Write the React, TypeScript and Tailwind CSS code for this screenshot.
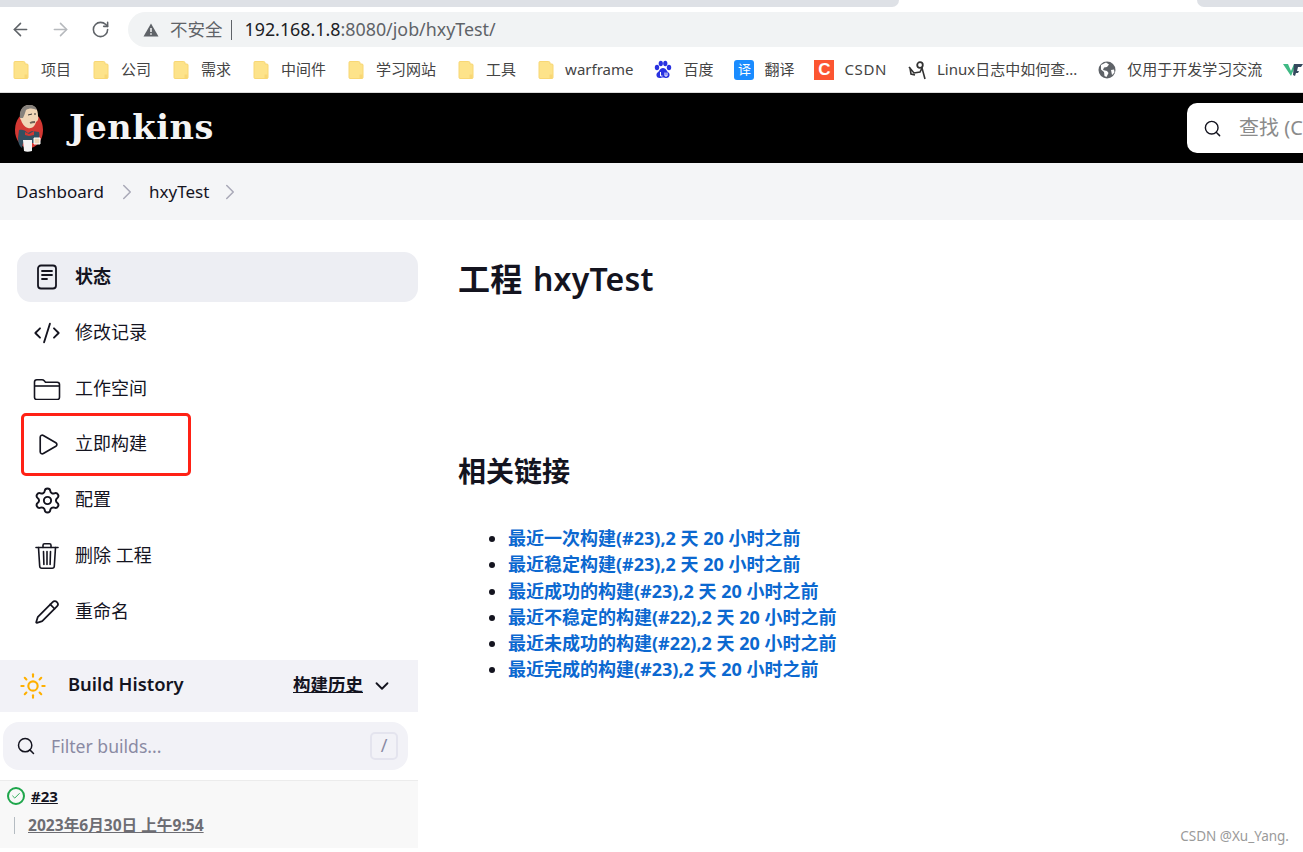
import React from "react";
import { ArrowLeft, ArrowRight, RotateCw, Search, ChevronRight, ChevronDown, Code2, Play, Settings, Pencil, Sun, Check } from "lucide-react";

const sans = "[font-family:'Noto_Sans','Noto_Sans_CJK_SC',sans-serif]";

function FolderMark() {
  return (
    <svg width="16" height="20" viewBox="0 0 16 20" className="shrink-0">
      <path d="M2 1.5h8.5c1 0 1.5.6 1.5 1.5v1h2c.6 0 1 .4 1 1v12.5c0 .6-.4 1-1 1H2c-.6 0-1-.4-1-1V2.500c0-.6.4-1 1-1z" fill="#fde38a" stroke="#f8d775" />
      <path d="M11.500 14.500h3v4h-3z" fill="#f8d775" />
    </svg>
  );
}

function Baidu() {
  return (
    <svg width="18" height="20" viewBox="0 0 18 20" className="shrink-0">
      <g fill="#2932e1">
        <ellipse cx="3" cy="7.500" rx="2.200" ry="2.800" />
        <ellipse cx="6.800" cy="3.500" rx="2.100" ry="2.800" />
        <ellipse cx="11.300" cy="3.500" rx="2.100" ry="2.800" />
        <ellipse cx="15" cy="7.500" rx="2.200" ry="2.800" />
        <path d="M9 8c3 0 3.500 3 5.500 4.500 2 1.800 1 5.500-2 5.500-1.500 0-2.300-.5-3.500-.5s-2 .5-3.500.5c-3 0-4-3.700-2-5.500C5.500 11 6 8 9 8z" />
      </g>
      <path d="M6.500 12v4h2M11 12.500v3.500h2v-3.500" stroke="#fff" strokeWidth="1" fill="none" />
    </svg>
  );
}

function LinuxMark() {
  return (
    <svg width="18" height="20" viewBox="0 0 18 20" className="shrink-0">
      <circle cx="12" cy="5" r="2.800" fill="none" stroke="#333" strokeWidth="1.800" />
      <path d="M1 7l5 6 6-1 2-4 3 11M2 8l1 6 4 1" fill="none" stroke="#333" strokeWidth="1.600" />
    </svg>
  );
}

function GlobeMark() {
  return (
    <svg width="18" height="18" viewBox="0 0 18 18" className="shrink-0">
      <circle cx="9" cy="9" r="8.500" fill="#5f6368" />
      <path d="M8 1.500l3 2-2 2.500-3 .5-1 2.500 4 1 1.500 2-2 4-2-1-.5-4-3-2.500L3 4zM13 9l3-.5.5 3-2.500 2.500z" fill="#fff" />
    </svg>
  );
}

function VueMark() {
  return (
    <svg width="20" height="14" viewBox="0 0 20 14" className="ml-[21px] shrink-0">
      <path d="M0 1h5l3 7 3-7h2L8 13z" fill="#3fb984" />
      <path d="M11 1h9l-2 3h-3l-1 4h2l-1 2h-2l-1 3-2-1z" fill="#35495e" />
    </svg>
  );
}

function Bookmark({ icon, label, cls, textCls = "" }: { icon: React.ReactNode; label: string; cls: string; textCls?: string }) {
  return (
    <div className={`flex shrink-0 items-center ${cls}`}>
      {icon}
      <span className={`mb-[2px] whitespace-nowrap text-[15px] leading-5 text-[#444] ${textCls}`}>{label}</span>
    </div>
  );
}

function JenkinsLogo() {
  return (
    <svg width="30" height="50" viewBox="0 0 30 50" className="shrink-0">
      <ellipse cx="15" cy="27" rx="14" ry="18" fill="#d33833" />
      <path d="M6 14c0-7 3-12 9-12 6 0 9 4 9 11 1 2 0 5-2 6-1 4-4 7-8 6-4-1-6-5-7-8-1-1-1-2-1-3z" fill="#f0d6b7" />
      <path d="M6 15c-1-7 2-13 9-13 5 0 7 2 8 5-4-2-8-2-11 0-1 3-2 6-3 8z" fill="#86817c" />
      <path d="M14 12l4-1M20 11l2 0" stroke="#333" strokeWidth="1" />
      <path d="M16 20c2-1 4-1 5-1" stroke="#6b6258" strokeWidth="1.800" />
      <path d="M5 27c3-1 6 0 9 3l4-2 7 1c1 4 0 8-3 10l-2 1H9l-1 5c-3-2-4-6-4-10z" fill="#335061" />
      <path d="M11 29l4 2 5-3 0 4-5 1-4-1z" fill="#d33833" />
      <path d="M9 37h9v11c-3 1-6 1-8 0z" fill="#f4f4f4" />
      <path d="M20 35h6v6h-6z" fill="#e9d2b5" stroke="#fff" />
    </svg>
  );
}

const stroke = 1.6;

function NavItem({ icon, label, active, children }: { icon: React.ReactNode; label: string; active?: boolean; children?: React.ReactNode }) {
  return (
    <div className={`relative flex h-[50px] items-center rounded-[14px] ${active ? "bg-[#edeef3]" : ""}`}>
      <div className="flex w-[58px] justify-center pl-[2px] text-[#14141f]">{icon}</div>
      <span className={`mb-[2px] text-[18px] leading-6 text-[#14141f] ${active ? "font-bold" : ""}`}>{label}</span>
      {children}
    </div>
  );
}

function StatusIcon() {
  return (
    <svg width="26" height="26" viewBox="0 0 26 26" fill="none" stroke="#14141f" strokeWidth={stroke + 0.2} strokeLinecap="round">
      <rect x="4" y="1.500" width="18" height="23" rx="3" />
      <path d="M8 7h10M8 11h10M8 15h5" />
    </svg>
  );
}

function FolderIcon() {
  return (
    <svg width="28" height="22" viewBox="0 0 28 22" fill="none" stroke="#14141f" strokeWidth={stroke} strokeLinejoin="round">
      <path d="M1.500 4c0-1.400 1-2.300 2.300-2.300h5.200c1 0 1.600.3 2.200 1l1.300 1.500h11.700c1.400 0 2.300.9 2.300 2.300v12.700c0 1.400-.9 2.300-2.300 2.300H3.800c-1.300 0-2.300-.9-2.300-2.300z" />
      <path d="M1.500 8h25" />
    </svg>
  );
}

function TrashIcon() {
  return (
    <svg width="26" height="28" viewBox="0 0 26 28" fill="none" stroke="#14141f" strokeWidth={stroke} strokeLinecap="round" strokeLinejoin="round">
      <path d="M2 5.500h22" />
      <path d="M9 5.500V3.300c0-.9.6-1.500 1.500-1.500h5c.9 0 1.500.6 1.500 1.500v2.200" />
      <path d="M4.500 5.500l1.200 18.800c.1 1.200 1 2 2.100 2h10.400c1.100 0 2-.8 2.100-2l1.200-18.800" />
      <path d="M9.500 9.500l.4 13M13 9.500v13M16.500 9.500l-.4 13" />
    </svg>
  );
}

const links = [
  "最近一次构建(#23),2 天 20 小时之前",
  "最近稳定构建(#23),2 天 20 小时之前",
  "最近成功的构建(#23),2 天 20 小时之前",
  "最近不稳定的构建(#22),2 天 20 小时之前",
  "最近未成功的构建(#22),2 天 20 小时之前",
  "最近完成的构建(#23),2 天 20 小时之前",
];

export default function App() {
  return (
    <div className={`relative flex h-[852px] w-[1303px] flex-col overflow-hidden bg-white ${sans}`}>
      {/* tab strip */}
      <div className="flex h-[7px] shrink-0 bg-white">
        <div className="w-[899px] rounded-br-lg bg-[#dee1e6]" />
        <div className="w-[298px]" />
        <div className="flex-1 rounded-bl-lg bg-[#dee1e6]" />
      </div>

      {/* address bar */}
      <div className="flex h-[40px] shrink-0 items-center pl-[10px] pt-[5px]">
        <ArrowLeft size={21} strokeWidth={1.8} className="text-[#5f6368]" />
        <ArrowRight size={21} strokeWidth={1.8} className="ml-[19px] text-[#b6b9bd]" />
        <RotateCw size={19} strokeWidth={2} className="ml-[20px] text-[#5f6368]" />
        <div className="ml-[18px] flex h-[35px] flex-1 items-center rounded-l-[18px] bg-[#f1f3f4] pl-[15px]">
          <svg width="16" height="14" viewBox="0 0 16 14" className="shrink-0">
            <path d="M8 0.500L15.500 13.500H0.500z" fill="#5f6368" />
            <path d="M8 5v4M8 10.300v1.500" stroke="#fff" strokeWidth="1.400" />
          </svg>
          <span className="ml-[11px] text-[17.5px] text-[#5f6368]">不安全</span>
          <span className="ml-[8px] h-[20px] w-px bg-[#5f6368]" />
          <span className="ml-[13px] whitespace-nowrap text-[17.85px] text-[#202124]">
            192.168.1.8<span className="text-[#5f6368]">:8080/job/hxyTest/</span>
          </span>
        </div>
      </div>

      {/* bookmarks */}
      <div className="flex h-[46px] shrink-0 items-center overflow-hidden border-b border-[#dcdcdc] pl-[13px]">
        <Bookmark icon={<FolderMark />} label="项目" cls="gap-[12px]" />
        <Bookmark icon={<FolderMark />} label="公司" cls="ml-[22px] gap-[12px]" />
        <Bookmark icon={<FolderMark />} label="需求" cls="ml-[22px] gap-[12px]" />
        <Bookmark icon={<FolderMark />} label="中间件" cls="ml-[22px] gap-[12px]" />
        <Bookmark icon={<FolderMark />} label="学习网站" cls="ml-[22px] gap-[12px]" />
        <Bookmark icon={<FolderMark />} label="工具" cls="ml-[22px] gap-[12px]" />
        <Bookmark icon={<FolderMark />} label="warframe" cls="ml-[22px] gap-[11px]" />
        <Bookmark icon={<Baidu />} label="百度" cls="ml-[21px] gap-[11px]" />
        <Bookmark
          icon={
            <span className="flex h-[20px] w-[20px] items-center justify-center rounded-[3px] bg-[#1a8cff] text-[13px] leading-none text-white">译</span>
          }
          label="翻译"
          cls="ml-[21px] gap-[10px]"
        />
        <Bookmark
          icon={
            <span className="flex h-[20px] w-[20px] items-center justify-center bg-[#fc5531] text-[17px] font-bold leading-none text-white [font-family:'Liberation_Sans',sans-serif]">C</span>
          }
          label="CSDN"
          cls="ml-[20px] gap-[10px]"
          textCls="tracking-[0.6px]"
        />
        <Bookmark icon={<LinuxMark />} label="Linux日志中如何查..." cls="ml-[21px] gap-[11px]" />
        <Bookmark icon={<GlobeMark />} label="仅用于开发学习交流" cls="ml-[21px] gap-[11px]" />
        <VueMark />
      </div>

      {/* Jenkins header */}
      <header className="flex h-[70px] shrink-0 items-center justify-between bg-black pl-[14px]">
        <div className="flex items-center">
          <JenkinsLogo />
          <span className="ml-[25px] text-[33.5px] font-bold leading-none tracking-[0.6px] text-[#f4f4f4] [font-family:'DejaVu_Serif',serif]">Jenkins</span>
        </div>
        <div className="flex h-[50px] w-[116px] items-center overflow-hidden rounded-l-[10px] bg-white pl-[16px]">
          <Search size={19} strokeWidth={1.8} className="shrink-0 text-[#14141f]" />
          <span className="ml-[17px] whitespace-nowrap text-[20px] text-[#8b8b8b]">查找 (C</span>
        </div>
      </header>

      {/* breadcrumb */}
      <nav className="flex h-[57px] shrink-0 items-center bg-[#f4f5f7] pl-[16px] text-[17px] text-[#14141f]">
        <span>Dashboard</span>
        <ChevronRight size={26} strokeWidth={1.4} className="ml-[10px] text-[#a9a9b8]" />
        <span className="ml-[9px]">hxyTest</span>
        <ChevronRight size={26} strokeWidth={1.4} className="ml-[8px] text-[#a9a9b8]" />
      </nav>

      {/* page */}
      <div className="flex flex-1 overflow-hidden">
        <aside className="flex w-[418px] shrink-0 flex-col pt-[32px]">
          <div className="flex flex-col gap-[5.8px] pl-[17px]">
            <NavItem active icon={<StatusIcon />} label="状态" />
            <NavItem icon={<Code2 size={28} strokeWidth={stroke} />} label="修改记录" />
            <NavItem icon={<FolderIcon />} label="工作空间" />
            <NavItem icon={<Play size={25} strokeWidth={stroke} />} label="立即构建">
              <div className="absolute left-[4px] top-[-6px] h-[63px] w-[170px] rounded-[5px] border-[3px] border-[#ff2115]" />
            </NavItem>
            <NavItem icon={<Settings size={29} strokeWidth={stroke} />} label="配置" />
            <NavItem icon={<TrashIcon />} label="删除 工程" />
            <NavItem icon={<Pencil size={26} strokeWidth={stroke} />} label="重命名" />
          </div>

          <div className="mt-[23px] flex h-[52px] shrink-0 items-center bg-[#f2f2f7] pl-[19px] pr-[25px]">
            <Sun size={28} strokeWidth={1.8} className="text-[#feb000]" />
            <span className="mb-[3px] ml-[21px] text-[18.4px] font-semibold text-[#14141f]">Build History</span>
            <span className="mb-[3px] ml-auto text-[17.5px] font-semibold text-[#14141f] underline">构建历史</span>
            <ChevronDown size={22} strokeWidth={2} className="ml-[8px] text-[#14141f]" />
          </div>

          <div className="ml-[3px] mt-[10px] flex h-[48px] w-[405px] shrink-0 items-center rounded-[16px] bg-[#f2f2f7] pl-[13px] pr-[10px]">
            <Search size={20} strokeWidth={1.8} className="text-[#14141f]" />
            <span className="ml-[15px] text-[17.6px] text-[#8a8aa3]">Filter builds...</span>
            <span className="ml-auto flex h-[28px] w-[28px] items-center justify-center rounded-[5px] border-2 border-[#e4e4ee] text-[18px] text-[#8a8aa3]">/</span>
          </div>

          <div className="mt-[10px] flex h-[68px] shrink-0 flex-col border-t border-[#ececec] bg-[#f8f8f8]">
            <div className="flex h-[30px] items-center pl-[7px]">
              <span className="flex h-[18px] w-[18px] items-center justify-center rounded-full border-2 border-[#1ea64b]">
                <Check size={10} strokeWidth={2.2} className="text-[#1ea64b]" />
              </span>
              <span className="ml-[6px] text-[15px] font-bold text-[#14141f] underline">#23</span>
            </div>
            <div className="flex items-center pl-[14px] pt-[3px]">
              <span className="h-[17px] w-px bg-[#b5bcc2]" />
              <span className="ml-[13px] text-[15.6px] font-bold text-[#6d6d73] underline">2023年6月30日 上午9:54</span>
            </div>
          </div>
        </aside>

        <main className="flex-1 pl-[40px] pt-[37px]">
          <h1 className="text-[32px] font-semibold leading-[44px] tracking-[0.2px] text-[#14141f] [word-spacing:2px]">工程 hxyTest</h1>
          <h2 className="mt-[150px] text-[28px] font-semibold leading-[40px] text-[#14141f]">相关链接</h2>
          <ul className="mt-[34px] list-disc pl-[50px] text-[#14141f]">
            {links.map((l) => (
              <li key={l} className="h-[26.25px] text-[18px] font-bold leading-[26.25px]">
                <span className="text-[#0b68d0]">{l}</span>
              </li>
            ))}
          </ul>
        </main>
      </div>

      <div className="absolute bottom-[8px] right-[14px] text-[13.5px] leading-4 text-[#9a9a9a]">CSDN @Xu_Yang.</div>
    </div>
  );
}
